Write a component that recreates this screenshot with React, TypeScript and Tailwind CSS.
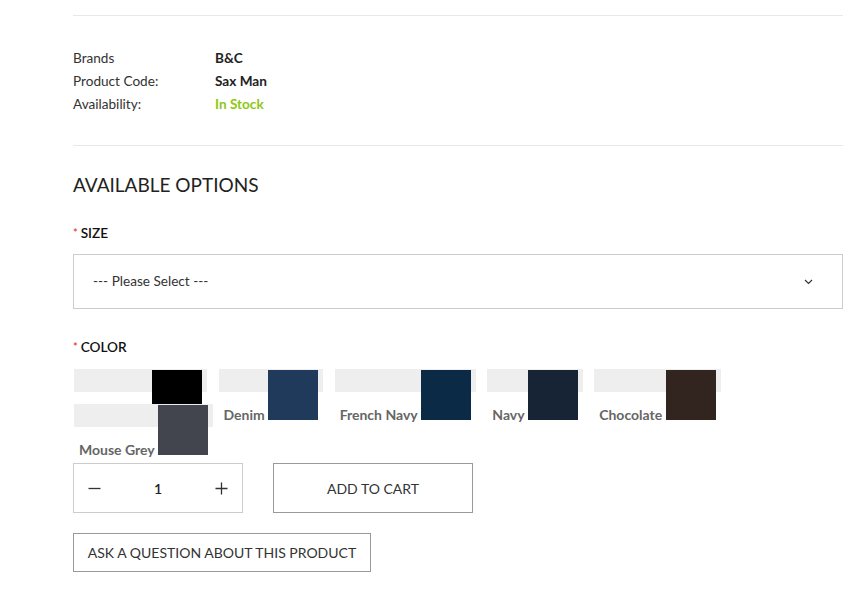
import React from 'react';

const details = [
  { label: 'Brands', value: 'B&C', className: 'text-[#222]' },
  { label: 'Product Code:', value: 'Sax Man', className: 'text-[#222]' },
  { label: 'Availability:', value: 'In Stock', className: 'text-[#8cc814]' },
];

const colors = [
  { name: '', color: '#000000', spacer: true },
  { name: 'Denim', color: '#1f3a5a' },
  { name: 'French Navy', color: '#0b2a45' },
  { name: 'Navy', color: '#172436' },
  { name: 'Chocolate', color: '#32241f' },
  { name: 'Mouse Grey', color: '#42454d', last: true },
];

const Required: React.FC<{ children: React.ReactNode }> = ({ children }) => (
  <div className="text-[13.6px] font-semibold uppercase leading-[20px] text-[#111]">
    <span className="mr-[3px] align-top text-[11px] text-[#e33]">*</span>
    {children}
  </div>
);

const App: React.FC = () => {
  return (
    <div className="min-h-[596px] w-[868px] bg-white pl-[73px] pr-[25px] pt-[15px] font-['Lato',sans-serif] text-[#333]">
      <div className="border-y border-[#e8e8e8] pb-[29px] pt-[31px]">
        {details.map((d) => (
          <div key={d.label} className="grid grid-cols-[142px_1fr] text-[13.6px] leading-[23px]">
            <span className="text-[#333]">{d.label}</span>
            <span className={`font-bold ${d.className}`}>{d.value}</span>
          </div>
        ))}
      </div>

      <h3 className="mt-[27px] text-[19px] font-normal uppercase leading-[24px] text-[#222]">
        Available Options
      </h3>

      <div className="mt-[26px]">
        <Required>Size</Required>
        <div className="mt-[11px] flex h-[55px] items-center justify-between border border-[#ccc] pl-[19px] pr-[29px] text-[13.6px] text-[#333]">
          <span>--- Please Select ---</span>
          <svg width="9" height="6" viewBox="0 0 9 6" fill="none">
            <path d="M1 1l3.5 3.5L8 1" stroke="#333" strokeWidth="1.2" />
          </svg>
        </div>
      </div>

      <div className="mt-[28px]">
        <Required>Color</Required>
        <div className="ml-px mt-[12px] flex flex-wrap items-start gap-x-[11.5px]">
          {colors.map((c, i) => (
            <label
              key={i}
              className={`relative block px-[5px] pt-px leading-none ${c.last ? '' : 'h-[35px]'}`}
            >
              <span className="absolute left-0 right-0 top-0 h-[23px] bg-[#eeeeee]" />
              {c.spacer ? (
                <span className="relative inline-block w-[73px]" />
              ) : (
                <span className="relative text-[14px] font-bold text-[#666]">{c.name} </span>
              )}
              <span
                className="relative inline-block h-[50px] w-[50px] align-baseline"
                style={{ backgroundColor: c.color }}
              />
            </label>
          ))}
        </div>
      </div>

      <div className="mt-[6px] flex gap-[30px]">
        <div className="flex h-[50px] w-[170px] items-center justify-between border border-[#ccc] px-[14px]">
          <svg width="13" height="13" viewBox="0 0 13 13">
            <path d="M0.5 6.5h12" stroke="#333" strokeWidth="1.3" />
          </svg>
          <span className="text-[14px] font-semibold text-[#222]">1</span>
          <svg width="13" height="13" viewBox="0 0 13 13">
            <path d="M0.5 6.5h12M6.5 0.5v12" stroke="#333" strokeWidth="1.3" />
          </svg>
        </div>
        <button
          type="button"
          className="h-[50px] w-[200px] border border-[#999] text-[14px] uppercase text-[#333]"
        >
          Add to cart
        </button>
      </div>

      <button
        type="button"
        className="mt-[20px] h-[39px] w-[298px] border border-[#999] text-[14px] uppercase text-[#333]"
      >
        Ask a question about this product
      </button>
    </div>
  );
};

export default App;
